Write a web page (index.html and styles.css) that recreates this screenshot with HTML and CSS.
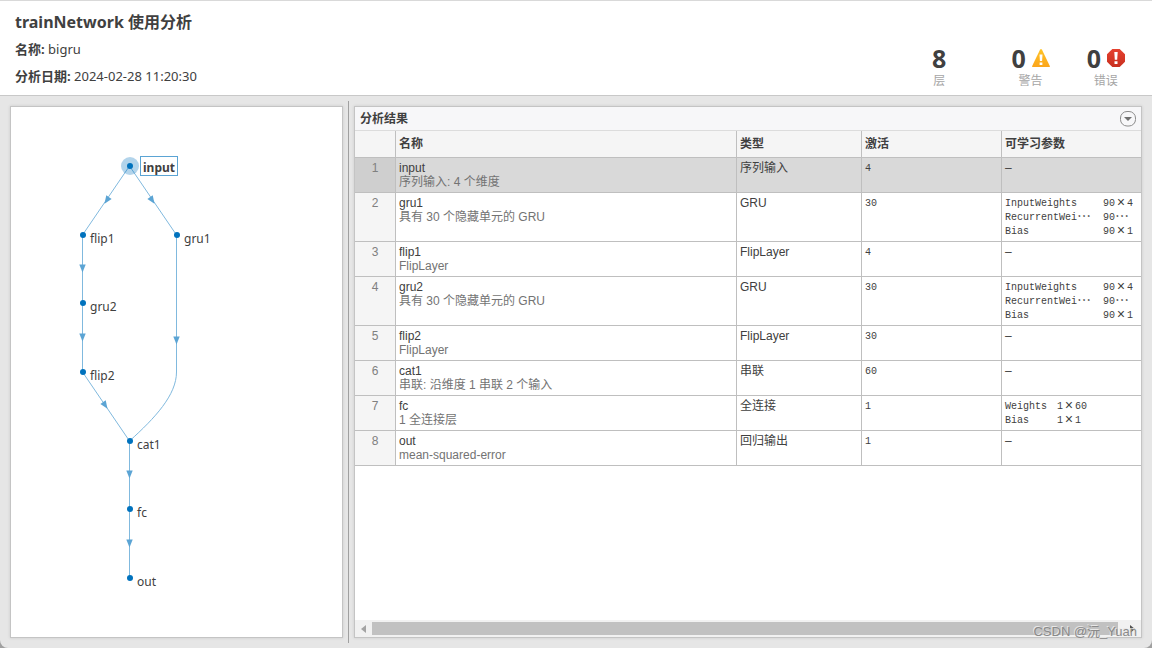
FILE: index.html
```html
<!DOCTYPE html>
<html lang="zh-CN">
<head>
<meta charset="utf-8">
<meta name="viewport" content="width=device-width, initial-scale=1">
<title>trainNetwork 使用分析</title>
<link rel="stylesheet" href="styles.css">
</head>
<body>
<div class="window">
  <header class="header">
    <div class="summary">
      <h1 class="title">trainNetwork 使用分析</h1>
      <p class="meta"><b>名称:</b> bigru</p>
      <p class="meta"><b>分析日期:</b> 2024-02-28 11:20:30</p>
    </div>
    <div class="stats">
      <div class="stat stat-layers">
        <div class="stat-value">8</div>
        <div class="stat-label">层</div>
      </div>
      <div class="stat">
        <div class="stat-value">0
          <svg class="stat-icon" viewBox="0 0 18 18" aria-hidden="true">
            <defs><linearGradient id="warn" x1="0" y1="0" x2="0" y2="1"><stop offset="0" stop-color="#ffc425"/><stop offset="1" stop-color="#fba51c"/></linearGradient></defs>
            <path d="M8 .8Q9-.7 10 .8L17.8 17Q18.2 18 17 18H1Q-.2 18 .2 17Z" fill="url(#warn)"/>
            <path d="M7.5 5.5h3l-.4 6.5H7.9zM7.6 13.4h2.8V16H7.6z" fill="#fff"/>
          </svg>
        </div>
        <div class="stat-label">警告</div>
      </div>
      <div class="stat">
        <div class="stat-value">0
          <svg class="stat-icon" viewBox="0 0 18 18" aria-hidden="true">
            <defs><linearGradient id="err" x1="0" y1="0" x2="0" y2="1"><stop offset="0" stop-color="#e5412f"/><stop offset="1" stop-color="#c8301f"/></linearGradient></defs>
            <path d="M5.3 0h7.4L18 5.3v7.4L12.7 18H5.3L0 12.7V5.3z" fill="url(#err)"/>
            <path d="M7.3 3h3.4l-.5 7.8H7.8zM7.5 12.2h3V15h-3z" fill="#fff"/>
          </svg>
        </div>
        <div class="stat-label">错误</div>
      </div>
    </div>
  </header>

  <main class="workspace">
    <section class="panel graph-panel" aria-label="网络图">
      <svg class="graph" width="331" height="530" viewBox="11 107 331 530">
        <defs>
          <path id="arrow" d="M-3.2 -3.5H3.2L0 4.5Z"/>
        </defs>
        <g class="edges">
          <path d="M129.5 166L82.5 235V372L129.5 441V578"/>
          <path d="M129.5 166L176.5 235V372C176.5 395 155 418 129.5 441"/>
        </g>
        <g class="arrows">
          <use href="#arrow" transform="translate(107 200) rotate(34)"/>
          <use href="#arrow" transform="translate(152 200) rotate(-34)"/>
          <use href="#arrow" transform="translate(82.5 268)"/>
          <use href="#arrow" transform="translate(82.5 337)"/>
          <use href="#arrow" transform="translate(176.5 340)"/>
          <use href="#arrow" transform="translate(105 405) rotate(-34)"/>
          <use href="#arrow" transform="translate(129.5 474)"/>
          <use href="#arrow" transform="translate(129.5 543)"/>
        </g>
        <circle class="halo" cx="130" cy="166" r="9"/>
        <g class="nodes">
          <circle cx="130" cy="166" r="3"/>
          <circle cx="83" cy="235" r="3"/>
          <circle cx="177" cy="235" r="3"/>
          <circle cx="83" cy="303" r="3"/>
          <circle cx="83" cy="372" r="3"/>
          <circle cx="130" cy="441" r="3"/>
          <circle cx="130" cy="509" r="3"/>
          <circle cx="130" cy="578" r="3"/>
        </g>
        <rect class="selection" x="140.5" y="156.5" width="37" height="19"/>
        <g class="labels">
          <text class="selected" x="143" y="172">input</text>
          <text x="90" y="243">flip1</text>
          <text x="184" y="243">gru1</text>
          <text x="90" y="311">gru2</text>
          <text x="90" y="380">flip2</text>
          <text x="137" y="449">cat1</text>
          <text x="137" y="517">fc</text>
          <text x="137" y="586">out</text>
        </g>
      </svg>
    </section>

    <div class="splitter"></div>

    <section class="panel results" aria-labelledby="results-title">
      <div class="results-bar">
        <h2 class="results-title" id="results-title">分析结果</h2>
        <button class="menu-button" type="button" aria-label="菜单">
          <svg viewBox="0 0 18 18" width="18" height="18" aria-hidden="true"><rect x="1.5" y="1.5" width="15" height="14.5" rx="6.5"/><path d="M5 7h8l-4 4z"/></svg>
        </button>
      </div>
      <div class="table-area">
        <table class="layers">
          <colgroup><col class="col-num"><col><col class="col-type"><col class="col-act"><col class="col-learn"></colgroup>
          <thead>
            <tr><th scope="col" aria-label="序号"></th><th scope="col">名称</th><th scope="col">类型</th><th scope="col">激活</th><th scope="col">可学习参数</th></tr>
          </thead>
          <tbody>
            <tr class="is-selected"><td class="num">1</td><td>input<div class="desc">序列输入: 4 个维度</div></td><td>序列输入</td><td class="mono">4</td><td>–</td></tr>
            <tr><td class="num">2</td><td>gru1<div class="desc">具有 30 个隐藏单元的 GRU</div></td><td>GRU</td><td class="mono">30</td>
              <td class="mono"><div class="params"><span>InputWeights</span><span>90<i>×</i>4</span><span>RecurrentWei<i>⋯</i></span><span>90<i>⋯</i></span><span>Bias</span><span>90<i>×</i>1</span></div></td></tr>
            <tr><td class="num">3</td><td>flip1<div class="desc">FlipLayer</div></td><td>FlipLayer</td><td class="mono">4</td><td>–</td></tr>
            <tr><td class="num">4</td><td>gru2<div class="desc">具有 30 个隐藏单元的 GRU</div></td><td>GRU</td><td class="mono">30</td>
              <td class="mono"><div class="params"><span>InputWeights</span><span>90<i>×</i>4</span><span>RecurrentWei<i>⋯</i></span><span>90<i>⋯</i></span><span>Bias</span><span>90<i>×</i>1</span></div></td></tr>
            <tr><td class="num">5</td><td>flip2<div class="desc">FlipLayer</div></td><td>FlipLayer</td><td class="mono">30</td><td>–</td></tr>
            <tr><td class="num">6</td><td>cat1<div class="desc">串联: 沿维度 1 串联 2 个输入</div></td><td>串联</td><td class="mono">60</td><td>–</td></tr>
            <tr><td class="num">7</td><td>fc<div class="desc">1 全连接层</div></td><td>全连接</td><td class="mono">1</td>
              <td class="mono"><div class="params params-short"><span>Weights</span><span>1<i>×</i>60</span><span>Bias</span><span>1<i>×</i>1</span></div></td></tr>
            <tr><td class="num">8</td><td>out<div class="desc">mean-squared-error</div></td><td>回归输出</td><td class="mono">1</td><td>–</td></tr>
          </tbody>
        </table>
      </div>
      <div class="scrollbar">
        <button class="scroll-button" type="button" aria-label="向左滚动"><svg width="5" height="8" viewBox="0 0 5 8" aria-hidden="true"><path d="M5 0v8L0 4z" fill="#a3a3a3"/></svg></button>
        <div class="scroll-track"><div class="scroll-thumb"></div></div>
        <button class="scroll-button" type="button" aria-label="向右滚动"><svg width="5" height="8" viewBox="0 0 5 8" aria-hidden="true"><path d="M0 0v8l5-4z" fill="#505050"/></svg></button>
      </div>
    </section>
  </main>
  <div class="watermark">CSDN @沅_Yuan</div>
</div>
</body>
</html>
```

FILE: styles.css
```css
* {
  box-sizing: border-box;
}

body {
  margin: 0;
  background: #a0a0a0;
  color: #404040;
  font-family: "Noto Sans", "Noto Sans CJK SC", sans-serif;
  font-size: 13px;
}

h1, h2, p {
  margin: 0;
}

button {
  padding: 0;
  border: 0;
  background: none;
}

.window {
  position: relative;
  display: flex;
  flex-direction: column;
  min-height: 100vh;
  overflow: hidden;
  border-top: 1px solid #d9d9d9;
  border-radius: 0 0 8px 8px;
  background: #e6e6e6;
}

.header {
  display: flex;
  justify-content: space-between;
  padding: 8px 27px 5px 15px;
  border-bottom: 1px solid #c8c8c8;
  background: #fff;
}

.title {
  font-size: 16px;
  line-height: 27px;
}

.meta {
  line-height: 27px;
}

.stats {
  display: flex;
  gap: 37px;
  padding-top: 34px;
}

.stat {
  text-align: center;
}

.stat-layers {
  margin-right: 28px;
}

.stat-value {
  display: flex;
  align-items: center;
  justify-content: center;
  gap: 6px;
  font-size: 25px;
  font-weight: 700;
  line-height: 30px;
}

.stat-icon {
  width: 18px;
  height: 18px;
}

.stat-label {
  color: #a6a6a6;
  font-size: 12px;
  line-height: 16px;
}

.workspace {
  display: grid;
  flex: 1;
  grid-template-columns: 333px 1px minmax(0, 1fr);
  gap: 5px;
  padding: 10px;
}

.panel {
  border: 1px solid #c4c4c4;
  background: #fff;
  box-shadow: 0 0 3px rgba(0, 0, 0, 0.12);
}

.splitter {
  margin: -5px 0;
  background: #a0a0a0;
}

.graph {
  display: block;
}

.edges {
  fill: none;
  stroke: #80b9de;
  stroke-width: 1;
}

.arrows {
  fill: #5ba4d4;
}

.halo {
  fill: #0072bd;
  fill-opacity: 0.3;
}

.nodes {
  fill: #0072bd;
}

.selection {
  fill: #fff;
  stroke: #5ba4d4;
}

.labels {
  fill: #404040;
  font-size: 12px;
}

.selected {
  font-weight: 700;
}

.results {
  display: flex;
  flex-direction: column;
}

.results-bar {
  display: flex;
  align-items: center;
  justify-content: space-between;
  height: 24px;
  padding: 0 4px 0 5px;
  border-bottom: 1px solid #dcdcdc;
  background: #f7f7f9;
}

.results-title {
  font-size: 12px;
  line-height: 23px;
}

.menu-button {
  width: 18px;
  height: 18px;
}

.menu-button svg {
  display: block;
  fill: #707070;
}

.menu-button rect {
  fill: #f7f7f9;
  stroke: #8c8c8c;
}

.table-area {
  flex: 1;
}

.layers {
  width: 100%;
  border-spacing: 0;
  table-layout: fixed;
  font-family: "Liberation Sans", "Noto Sans CJK SC", sans-serif;
  font-size: 12px;
  line-height: 14px;
}

.col-num { width: 41px; }
.col-type { width: 125px; }
.col-act { width: 140px; }
.col-learn { width: 139px; }

.layers th,
.layers td {
  padding: 3px;
  border-right: 1px solid #bfbfbf;
  border-bottom: 1px solid #bfbfbf;
  text-align: left;
  vertical-align: top;
}

.layers th:last-child,
.layers td:last-child {
  border-right: 0;
}

.layers th {
  height: 27px;
  padding-top: 6px;
  background: #f5f5f5;
}

.layers .num {
  background: #f5f5f5;
  color: #808080;
  text-align: center;
}

.is-selected td {
  background: #d9d9d9;
}

.layers .is-selected .num {
  background: #cfcfcf;
}

.desc {
  color: #737373;
}

.layers .mono {
  padding-top: 4px;
  padding-bottom: 2px;
  font-family: "Liberation Mono", "Noto Sans CJK SC", monospace;
  font-size: 10px;
}

.params {
  display: grid;
  grid-template-columns: 98px 1fr;
  grid-auto-rows: 14px;
  white-space: nowrap;
}

.params-short {
  grid-template-columns: 52px 1fr;
}

.params i {
  display: inline-block;
  width: 12px;
  font-size: 14px;
  font-style: normal;
  line-height: 10px;
  text-align: center;
  vertical-align: middle;
}

.scrollbar {
  display: flex;
  height: 17px;
  background: #f1f1f1;
}

.scroll-button {
  display: flex;
  align-items: center;
  justify-content: center;
  width: 17px;
}

.scroll-track {
  flex: 1;
  padding: 2px 6px 2px 0;
}

.scroll-thumb {
  height: 100%;
  background: #c1c1c1;
}

.watermark {
  position: absolute;
  right: 15px;
  bottom: 7px;
  color: #8a8a8a;
  font: 13px/18px "Liberation Sans", "Noto Sans CJK SC", sans-serif;
  text-shadow: -1px -1px 0 #e8e8e8;
}
```
